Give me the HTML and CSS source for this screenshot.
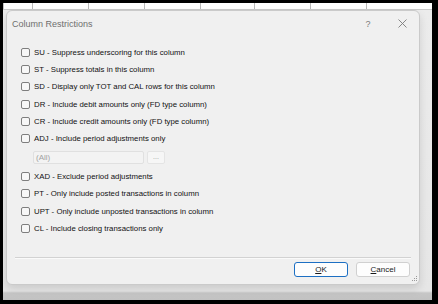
FILE: index.html
```html
<!DOCTYPE html>
<html lang="en">
<head>
    <meta charset="UTF-8">
    <title>Column Restrictions</title>
    <link rel="stylesheet" href="styles.css">
</head>
<body>
    <div class="frame">
        <div class="sheet-top">
            <span class="cell cell-first"></span>
            <span class="cell"></span>
            <span class="cell"></span>
            <span class="cell"></span>
            <span class="cell cell-narrow"></span>
            <span class="cell"></span>
            <span class="cell"></span>
        </div>

        <div class="stage">
            <div class="dialog">
                <div class="titlebar">
                    <span class="title">Column Restrictions</span>
                    <span class="tb-btn help">?</span>
                    <span class="tb-btn">
                        <svg width="9" height="9" viewBox="0 0 9 9">
                            <path d="M0.5 0.5 L8.5 8.5 M8.5 0.5 L0.5 8.5" stroke="#7a7a7a" stroke-width="0.9" fill="none"/>
                        </svg>
                    </span>
                </div>

                <div class="options">
                    <label class="opt"><span class="box"></span>SU - Suppress underscoring for this column</label>
                    <label class="opt"><span class="box"></span>ST - Suppress totals in this column</label>
                    <label class="opt"><span class="box"></span>SD - Display only TOT and CAL rows for this column</label>
                    <label class="opt"><span class="box"></span>DR - Include debit amounts only (FD type column)</label>
                    <label class="opt"><span class="box"></span>CR - Include credit amounts only (FD type column)</label>
                    <label class="opt"><span class="box"></span>ADJ - Include period adjustments only</label>
                    <div class="period-row">
                        <div class="period-input">(All)</div>
                        <div class="period-btn">...</div>
                    </div>
                    <label class="opt"><span class="box"></span>XAD - Exclude period adjustments</label>
                    <label class="opt"><span class="box"></span>PT - Only include posted transactions in column</label>
                    <label class="opt"><span class="box"></span>UPT - Only include unposted transactions in column</label>
                    <label class="opt"><span class="box"></span>CL - Include closing transactions only</label>
                </div>

                <div class="separator"></div>

                <div class="actions">
                    <button class="btn btn-default"><u>O</u>K</button>
                    <button class="btn"><u>C</u>ancel</button>
                </div>

                <svg class="grip" width="6" height="6" viewBox="0 0 6 6">
                    <rect x="4" y="0" width="1" height="1" fill="#9a9a9a"/>
                    <rect x="2" y="2" width="1" height="1" fill="#9a9a9a"/>
                    <rect x="4" y="2" width="1" height="1" fill="#9a9a9a"/>
                    <rect x="0" y="4" width="1" height="1" fill="#9a9a9a"/>
                    <rect x="2" y="4" width="1" height="1" fill="#9a9a9a"/>
                    <rect x="4" y="4" width="1" height="1" fill="#9a9a9a"/>
                </svg>
            </div>
        </div>
    </div>
</body>
</html>
```

FILE: styles.css
```css
body {
    margin: 0;
    height: 304px;
    overflow: hidden;
    background-color: #000;
    font-family: "Liberation Sans", Arial, sans-serif;
}
.frame {
    width: 429px;
    height: 297px;
    margin: 3px 0 0 3px;
    background-color: #ebebeb;
    display: flex;
    flex-direction: column;
    overflow: hidden;
}
.sheet-top {
    height: 6px;
    display: flex;
    background-color: #fff;
    border-bottom: 1px solid #c9c9c9;
}
.cell {
    width: 55px;
    border-right: 1px solid #b8b8b8;
}
.cell-first {
    width: 28px;
    border-left: 1px solid #c4c4c4;
}
.cell-narrow {
    width: 53px;
}
.stage {
    flex: 1;
    display: flex;
    padding-left: 3px;
    background: linear-gradient(to bottom, #ececec 0, #e6e6e6 281px, #c6c6c6 283px, #c2c2c2 290px);
}
.dialog {
    position: relative;
    width: 412px;
    height: 273px;
    background-color: #f0f0f0;
    border: 1px solid #cacaca;
    border-radius: 6px;
    box-shadow: 0 4px 8px rgba(0, 0, 0, .12);
    display: flex;
    flex-direction: column;
}
.titlebar {
    height: 25px;
    display: flex;
    align-items: center;
    padding-left: 5px;
    color: #6e6e6e;
}
.title {
    flex: 1;
    font-size: 9px;
}
.tb-btn {
    width: 34px;
    display: flex;
    justify-content: center;
    align-items: center;
}
.help {
    font-size: 9px;
    color: #7a7a7a;
}
.options {
    flex: 1;
    padding: 8px 0 0 14px;
    display: flex;
    flex-direction: column;
}
.opt {
    height: 17.2px;
    display: flex;
    align-items: center;
    gap: 4px;
    font-size: 7.8px;
    color: #111;
}
.box {
    width: 7px;
    height: 7px;
    border: 1px solid #7e7e7e;
    border-radius: 2px;
    background-color: #f7f7f7;
}
.period-row {
    display: flex;
    gap: 3px;
    margin: 4px 0 4px 12px;
}
.period-input {
    width: 107px;
    height: 11px;
    border: 1px solid #e0e0e0;
    border-radius: 2px;
    background-color: #f3f3f3;
    padding-left: 2px;
    font-size: 8px;
    line-height: 11px;
    color: #a2a2a2;
}
.period-btn {
    width: 16px;
    height: 11px;
    border: 1px solid #e4e4e4;
    border-radius: 2px;
    background-color: #f6f6f6;
    font-size: 7px;
    line-height: 9px;
    text-align: center;
    color: #9a9a9a;
}
.separator {
    margin: 0 8px 0 8px;
    height: 1px;
    background-color: #d2d2d2;
    border-bottom: 1px solid #fafafa;
}
.actions {
    display: flex;
    justify-content: flex-end;
    gap: 8px;
    padding: 3px 9px 7px 0;
}
.btn {
    width: 54px;
    height: 15px;
    padding: 0;
    border: 1px solid #d0d0d0;
    border-radius: 3px;
    background-color: #fdfdfd;
    font-family: "Liberation Sans", Arial, sans-serif;
    font-size: 8px;
    color: #1a1a1a;
}
.btn-default {
    border-color: #1c6fc3;
}
.grip {
    position: absolute;
    right: 1px;
    bottom: 2px;
}
```
